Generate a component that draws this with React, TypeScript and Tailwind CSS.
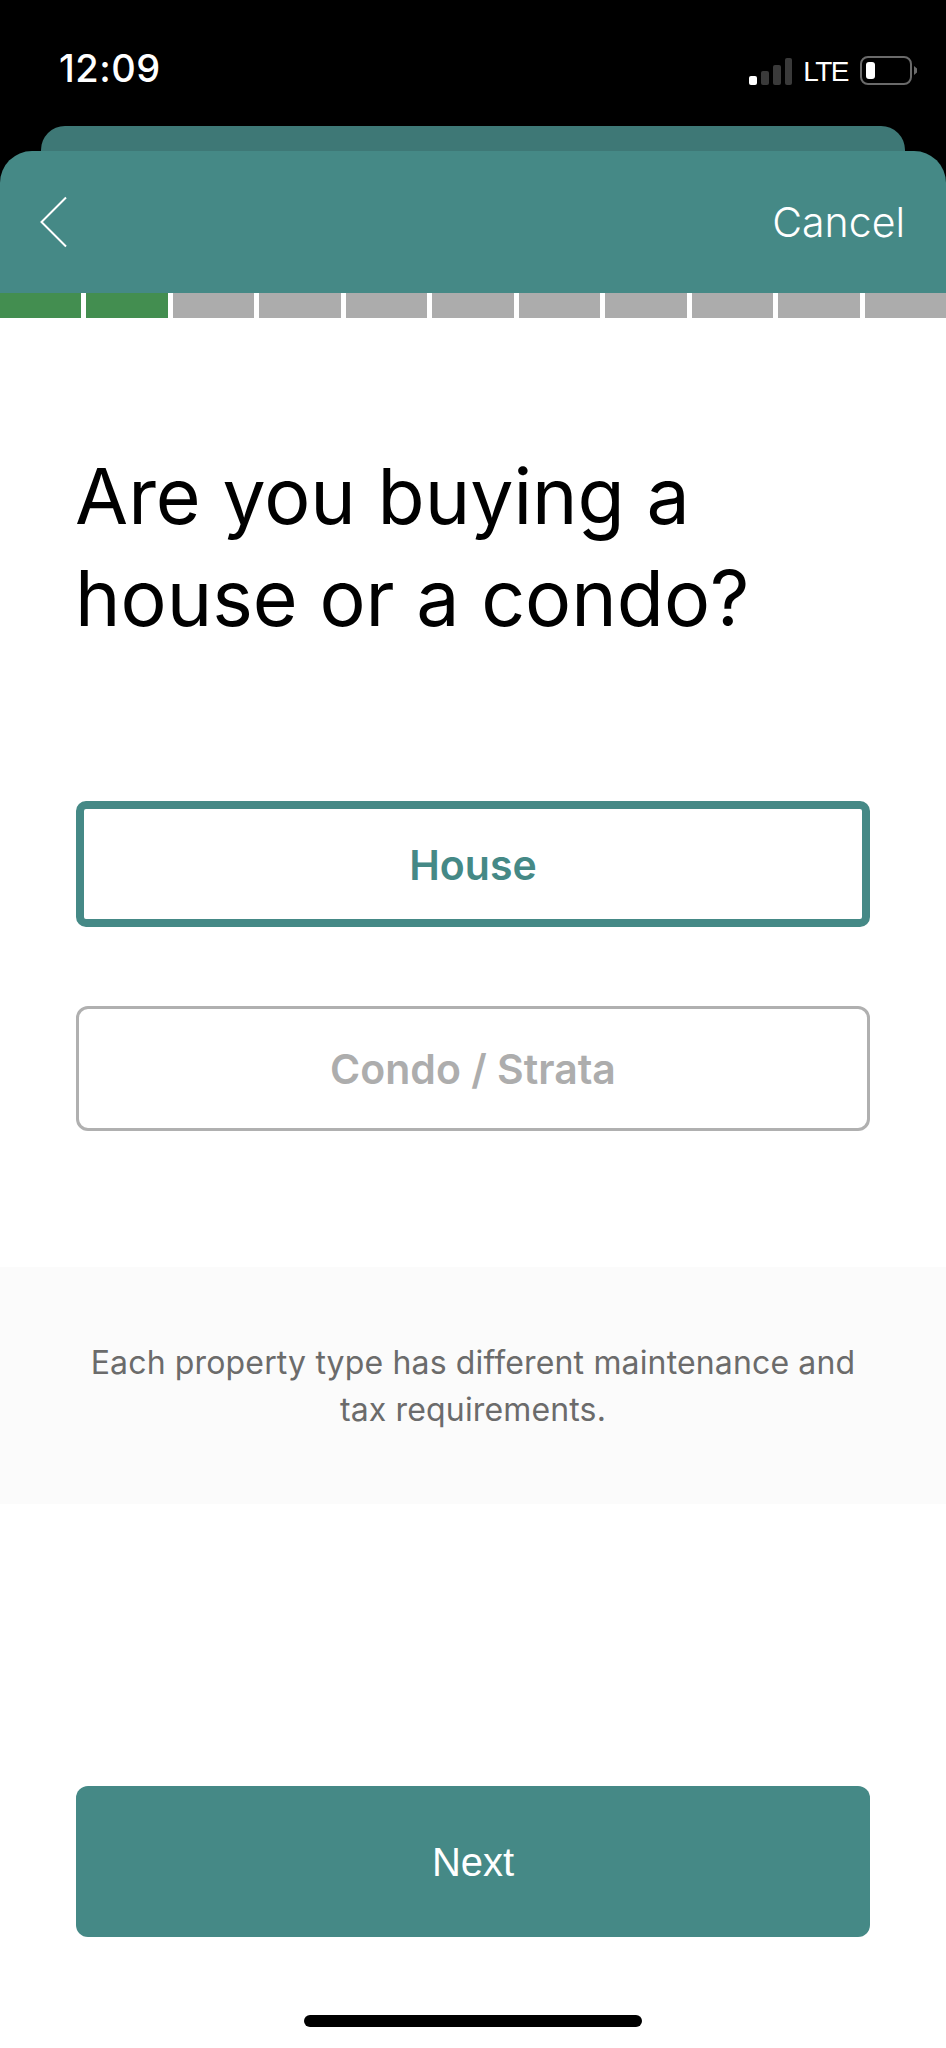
import React from "react";

const Segment = ({ done }: { done?: boolean }) => (
  <div className={done ? "flex-1 bg-[#438e50]" : "flex-1 bg-[#acacac]"} />
);

export default function App() {
  return (
    <div className="relative flex h-[2048px] w-[946px] flex-col overflow-hidden bg-black font-['Inter',sans-serif]">
      <div className="flex h-[126px] items-start justify-between pt-[46px] pl-[59px] pr-[28px]">
        <span className="text-[38px] leading-[44px] font-medium tracking-[0.5px] text-white">12:09</span>
        <div className="flex items-center pt-[7px]">
          <svg width="44" height="28" viewBox="0 0 44 28" className="block">
            <rect x="0" y="19" width="8" height="9" rx="2" fill="#ffffff" />
            <rect x="12" y="14" width="8" height="14" rx="2" fill="#3a3a3a" />
            <rect x="24" y="8" width="8" height="20" rx="2" fill="#3a3a3a" />
            <rect x="36" y="1" width="7" height="27" rx="2" fill="#3a3a3a" />
          </svg>
          <span className="ml-[10px] pt-[3px] font-['Liberation_Sans',sans-serif] text-[28px] leading-[32px] tracking-[-1.5px] text-white">LTE</span>
          <svg width="58" height="30" viewBox="0 0 58 30" className="ml-[12px] block">
            <rect x="1" y="1" width="50" height="27" rx="7" fill="none" stroke="#6a6a6a" strokeWidth="2" />
            <rect x="6" y="6" width="9" height="17" rx="3" fill="#ffffff" />
            <path d="M54 10 L57 12.5 L57 16.5 L54 19 Z" fill="#6a6a6a" />
          </svg>
        </div>
      </div>

      <div className="mx-[41px] h-[25px] rounded-t-[24px] bg-[#3e7876]" />

      <div className="flex h-[142px] items-center justify-between rounded-t-[32px] bg-[#458986] pl-[40px] pr-[41px]">
        <svg width="27" height="52" viewBox="0 0 27 52" className="block" aria-hidden="true">
          <path d="M26 1.5 L1.5 26 L26 50.5" fill="none" stroke="#ffffff" strokeWidth="2" />
        </svg>
        <span className="text-[41px] leading-[48px] font-light text-white">Cancel</span>
      </div>

      <div className="flex h-[25px] gap-[5px] bg-white">
        <Segment done />
        <Segment done />
        <Segment />
        <Segment />
        <Segment />
        <Segment />
        <Segment />
        <Segment />
        <Segment />
        <Segment />
        <Segment />
      </div>

      <div className="flex flex-1 flex-col bg-white">
        <h1 className="pl-[75px] pt-[127px] text-[77px] leading-[102px] font-normal text-black">
          Are you buying a
          <br />
          house or a condo?
        </h1>

        <div className="mt-[152px] flex flex-col gap-[79px] px-[76px]">
          <div className="flex h-[126px] items-center justify-center rounded-[10px] border-[8px] border-[#458986] pt-[3px] text-[41px] font-semibold text-[#458986]">
            House
          </div>
          <div className="flex h-[125px] items-center justify-center rounded-[12px] border-[3px] border-[#b0b0b0] pt-[2px] text-[41px] font-semibold text-[#adadad]">
            Condo / Strata
          </div>
        </div>

        <div className="mt-[136px] flex h-[237px] items-center justify-center bg-[#fbfbfb] px-[80px] text-center text-[32px] leading-[47px] tracking-[0.15px] text-[#6b6b6b]">
          Each property type has different maintenance and tax requirements.
        </div>

        <div className="mx-[76px] mt-[282px] flex h-[151px] items-center justify-center rounded-[12px] bg-[#458986] font-['Liberation_Sans',sans-serif] text-[40px] text-white">
          Next
        </div>

        <div className="mx-auto mt-[78px] h-[12px] w-[338px] rounded-full bg-black" />
      </div>
    </div>
  );
}
